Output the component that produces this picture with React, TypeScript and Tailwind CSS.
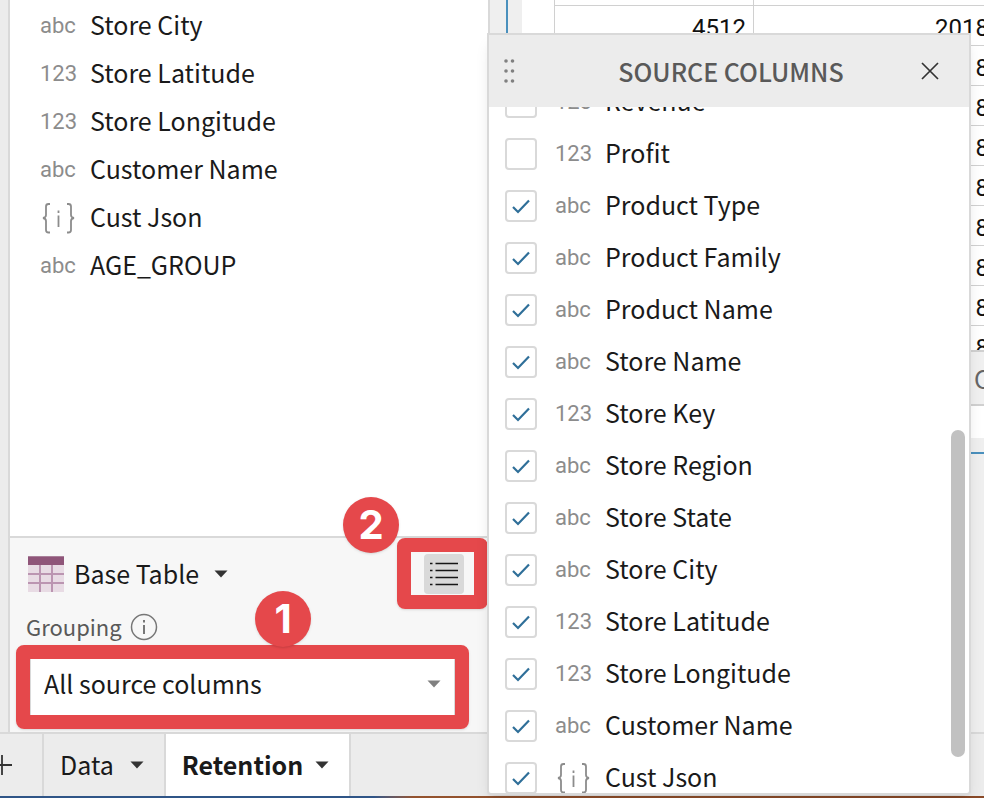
type Kind = "abc" | "123" | "json";
type Column = { name: string; kind: Kind; checked?: boolean };

const panelColumns: Column[] = [
  { name: "Store City", kind: "abc" },
  { name: "Store Latitude", kind: "123" },
  { name: "Store Longitude", kind: "123" },
  { name: "Customer Name", kind: "abc" },
  { name: "Cust Json", kind: "json" },
  { name: "AGE_GROUP", kind: "abc" },
];

const sourceColumns: Column[] = [
  { name: "Revenue", kind: "123", checked: false },
  { name: "Profit", kind: "123", checked: false },
  { name: "Product Type", kind: "abc", checked: true },
  { name: "Product Family", kind: "abc", checked: true },
  { name: "Product Name", kind: "abc", checked: true },
  { name: "Store Name", kind: "abc", checked: true },
  { name: "Store Key", kind: "123", checked: true },
  { name: "Store Region", kind: "abc", checked: true },
  { name: "Store State", kind: "abc", checked: true },
  { name: "Store City", kind: "abc", checked: true },
  { name: "Store Latitude", kind: "123", checked: true },
  { name: "Store Longitude", kind: "123", checked: true },
  { name: "Customer Name", kind: "abc", checked: true },
  { name: "Cust Json", kind: "json", checked: true },
];

const tableRows = [
  ["4512", "2018"],
  ["", "8"],
  ["", "8"],
  ["", "8"],
  ["", "8"],
  ["", "8"],
  ["", "8"],
  ["", "8"],
  ["", "8"],
];

function KindIcon({ kind }: { kind: Kind }) {
  if (kind === "json") {
    return (
      <svg className="h-8 w-[37px] shrink-0" viewBox="0 0 37 32" fill="none" stroke="#8c8c8c" strokeWidth="1.8" aria-hidden="true">
        <path d="M10 2H8.500Q6 2 6 4.500V13Q6 15.500 3 16Q6 16.500 6 19V28Q6 30.500 8.500 30.500H10" />
        <path d="M27 2H28.500Q31 2 31 4.500V13Q31 15.500 34 16Q31 16.500 31 19V28Q31 30.500 28.500 30.500H27" />
        <path d="M18.500 8.500V11M18.500 13.500V25" />
      </svg>
    );
  }
  return (
    <span className="w-[37px] shrink-0 font-['Roboto',sans-serif] text-[22px] leading-8 text-[#8c8c8c]">{kind}</span>
  );
}

function ColumnName({ children }: { children: string }) {
  return <span className="ml-[13px] whitespace-nowrap pb-1">{children}</span>;
}

function Caret({ className }: { className: string }) {
  return (
    <svg className={className} viewBox="0 0 14 8" fill="currentColor" aria-hidden="true">
      <path d="M0.500 0.500H13.500L7 7.500Z" />
    </svg>
  );
}

function TableIcon() {
  return (
    <svg className="h-9 w-9 shrink-0" viewBox="0 0 36 36" aria-hidden="true">
      <rect width="36" height="36" fill="#e8dbe4" />
      <path d="M12 9V36M24 9V36M0 18H36M0 27H36" stroke="#bb95b1" strokeWidth="2" />
      <rect width="36" height="9" fill="#8f5579" />
      <path d="M0 0.500H36" stroke="#a9809a" />
    </svg>
  );
}

function ListIcon() {
  return (
    <svg className="h-7 w-7" viewBox="0 0 28 28" stroke="#161616" strokeWidth="1.6" aria-hidden="true">
      <path d="M0 3.500H2.500M0 10.500H2.500M0 17.500H2.500M0 24.500H2.500M5.500 3.500H28M5.500 10.500H28M5.500 17.500H28M5.500 24.500H28" />
    </svg>
  );
}

function SourceRow({ column }: { column: Column }) {
  return (
    <li>
      <label className="flex h-[52px] items-center pl-4">
        <span className="relative mr-[18px] h-8 w-8 shrink-0">
          <input
            type="checkbox"
            defaultChecked={column.checked}
            className="peer block h-8 w-8 appearance-none rounded-[4px] border-2 border-[#d9d9d9] bg-white"
          />
          <svg
            className="pointer-events-none absolute inset-0 hidden h-8 w-8 peer-checked:block"
            viewBox="0 0 32 32"
            fill="none"
            stroke="#2f6f99"
            strokeWidth="2.200"
            aria-hidden="true"
          >
            <path d="M8 17L13 22L24 10.500" />
          </svg>
        </span>
        <KindIcon kind={column.kind} />
        <ColumnName>{column.name}</ColumnName>
      </label>
    </li>
  );
}

function ColumnPanel() {
  return (
    <section className="flex w-[482px] shrink-0 flex-col border-x-2 border-[#d9d9d9] bg-white">
      <ul className="flex-1 pt-0.5">
        {panelColumns.map((column) => (
          <li key={column.name} className="flex h-12 items-center pl-[30px]">
            <KindIcon kind={column.kind} />
            <ColumnName>{column.name}</ColumnName>
          </li>
        ))}
      </ul>
      <div className="flex flex-col border-t-2 border-[#d9d9d9] bg-[#f7f7f7] pb-4">
        <div className="flex h-[72px] items-center justify-between pl-[18px] pr-6">
          <button type="button" className="flex items-center">
            <TableIcon />
            <span className="ml-2.5 pb-0.5">Base Table</span>
            <Caret className="ml-[15px] h-2 w-3.5 text-[#333]" />
          </button>
          <div className="relative">
            <button type="button" aria-label="Source columns" className="flex h-10 w-10 items-center justify-center rounded bg-[#d9d9d9]">
              <ListIcon />
            </button>
            <div className="pointer-events-none absolute -left-[27px] -top-4 h-[71px] w-[91px] rounded-lg border-14 border-[#e5484b] shadow" />
            <Badge className="absolute -left-[81px] -top-[57px]">2</Badge>
          </div>
        </div>
        <div className="flex h-[34px] items-center pl-4 text-[22px] text-[#595959]">
          <label htmlFor="grouping" className="pb-0.5">Grouping</label>
          <svg className="ml-2 h-7 w-7" viewBox="0 0 28 28" fill="none" stroke="#777" aria-hidden="true">
            <circle cx="14" cy="14" r="12.500" strokeWidth="1.500" />
            <path d="M14 7V9.500M14 12V21" strokeWidth="2" />
          </svg>
        </div>
        <div className="relative ml-5 mr-[33px] mt-3.5 h-[58px]">
          <select
            id="grouping"
            className="block h-full w-full appearance-none border border-[#d9d9d9] bg-white pb-2 pl-[13px] text-[#1a1a1a]"
          >
            <option>All source columns</option>
          </select>
          <Caret className="pointer-events-none absolute right-3.5 top-[22px] h-2 w-3.5 text-[#808080]" />
          <div className="pointer-events-none absolute -inset-x-3.5 -inset-y-[13px] rounded-lg border-14 border-[#e5484b] shadow" />
          <Badge className="absolute -top-[67px] left-[225px]">1</Badge>
        </div>
      </div>
    </section>
  );
}

function Badge({ children, className }: { children: string; className: string }) {
  return (
    <span
      className={`${className} flex h-14 w-14 items-center justify-center rounded-full bg-[#e5484b] font-['Inter',sans-serif] text-[40px] font-bold leading-none text-white shadow`}
    >
      {children}
    </span>
  );
}

function Canvas() {
  return (
    <main className="min-w-0 flex-1 overflow-hidden bg-[#efefef] pl-4">
      <div className="h-[454px] border-b-2 border-l-2 border-[#4a90bd] pl-3.5">
        <div className="flex h-[438px] flex-col overflow-hidden bg-white">
          <div className="h-[350px] overflow-hidden pl-8">
            <table className="w-[440px] table-fixed border-collapse border-x border-[#d0d0d0] font-['Roboto',sans-serif] text-[24px] leading-none text-[#111]">
              <colgroup>
                <col className="w-[199px]" />
                <col />
              </colgroup>
              <tbody>
                <tr className="h-[5px]">
                  <td className="border-r border-[#d0d0d0]" />
                  <td />
                </tr>
                {tableRows.map((row, index) => (
                  <tr key={index} className="h-10 border-t border-[#d0d0d0]">
                    <td className="border-r border-[#d0d0d0] pr-[7px] pt-1.5 text-right">{row[0]}</td>
                    <td className="pr-1 pt-1.5 text-right">{row[1]}</td>
                  </tr>
                ))}
              </tbody>
            </table>
          </div>
          <div className="flex h-14 items-center border-y-2 border-[#d0d0d0] bg-[#f0f0f0] pl-[452px] text-[#666]">C</div>
        </div>
      </div>
    </main>
  );
}

function SourcePanel() {
  return (
    <aside className="absolute bottom-[3px] left-[487px] top-[33px] flex w-[484px] flex-col overflow-hidden rounded-b border-2 border-[#d9d9d9] bg-white shadow-lg">
      <header className="flex h-[72px] shrink-0 items-center bg-[#ececec] pl-[15px] pr-[30px]">
        <svg className="h-6 w-3" viewBox="0 0 12 24" fill="#808080" aria-hidden="true">
          <circle cx="2" cy="2" r="1.800" />
          <circle cx="8.500" cy="2" r="1.800" />
          <circle cx="2" cy="12" r="1.800" />
          <circle cx="8.500" cy="12" r="1.800" />
          <circle cx="2" cy="22" r="1.800" />
          <circle cx="8.500" cy="22" r="1.800" />
        </svg>
        <h2 className="flex-1 pl-[25px] text-center font-medium text-[#595959]">SOURCE COLUMNS</h2>
        <button type="button" aria-label="Close">
          <svg className="h-[18px] w-[18px]" viewBox="0 0 18 18" stroke="#333" strokeWidth="1.700" aria-hidden="true">
            <path d="M1 1L17 17M17 1L1 17" />
          </svg>
        </button>
      </header>
      <div className="relative min-h-0 flex-1 overflow-hidden">
        <ul className="-mt-[31px]">
          {sourceColumns.map((column) => (
            <SourceRow key={column.name} column={column} />
          ))}
        </ul>
        <div className="absolute bottom-9 right-1 h-[327px] w-3.5 rounded-full bg-[#c1c1c1]" />
      </div>
    </aside>
  );
}

function SheetTabs() {
  return (
    <nav className="flex h-16 shrink-0 border-t-2 border-[#d9d9d9] bg-[#ececec]">
      <button type="button" aria-label="Add page" className="w-11 border-r-2 border-[#d9d9d9]">
        <svg className="h-5 w-3" viewBox="0 0 12 20" stroke="#333" strokeWidth="1.800" aria-hidden="true">
          <path d="M2 0V20M0 10H12" />
        </svg>
      </button>
      <button type="button" className="flex items-center border-r-2 border-[#d9d9d9] pl-4 pr-5">
        <span className="pb-[3px]">Data</span>
        <Caret className="ml-4 h-2 w-3.5 text-[#333]" />
      </button>
      <button type="button" className="flex items-center border-r-2 border-[#d9d9d9] bg-white pl-4 pr-5 font-bold">
        <span className="pb-[3px]">Retention</span>
        <Caret className="ml-3 h-2 w-3.5 text-[#333]" />
      </button>
    </nav>
  );
}

export default function App() {
  return (
    <div className="relative flex h-screen flex-col overflow-hidden bg-[#ececec] font-['Noto_Sans_CJK_SC',sans-serif] text-[25px] leading-8 text-[#1a1a1a]">
      <div className="flex min-h-0 flex-1">
        <div className="w-2 shrink-0 bg-[#ececec]" />
        <ColumnPanel />
        <Canvas />
      </div>
      <SheetTabs />
      <div className="h-0.5 shrink-0 bg-linear-to-r from-[#2f5587] from-38% via-[#94532e] via-42% to-[#8a4a28]" />
      <SourcePanel />
    </div>
  );
}
